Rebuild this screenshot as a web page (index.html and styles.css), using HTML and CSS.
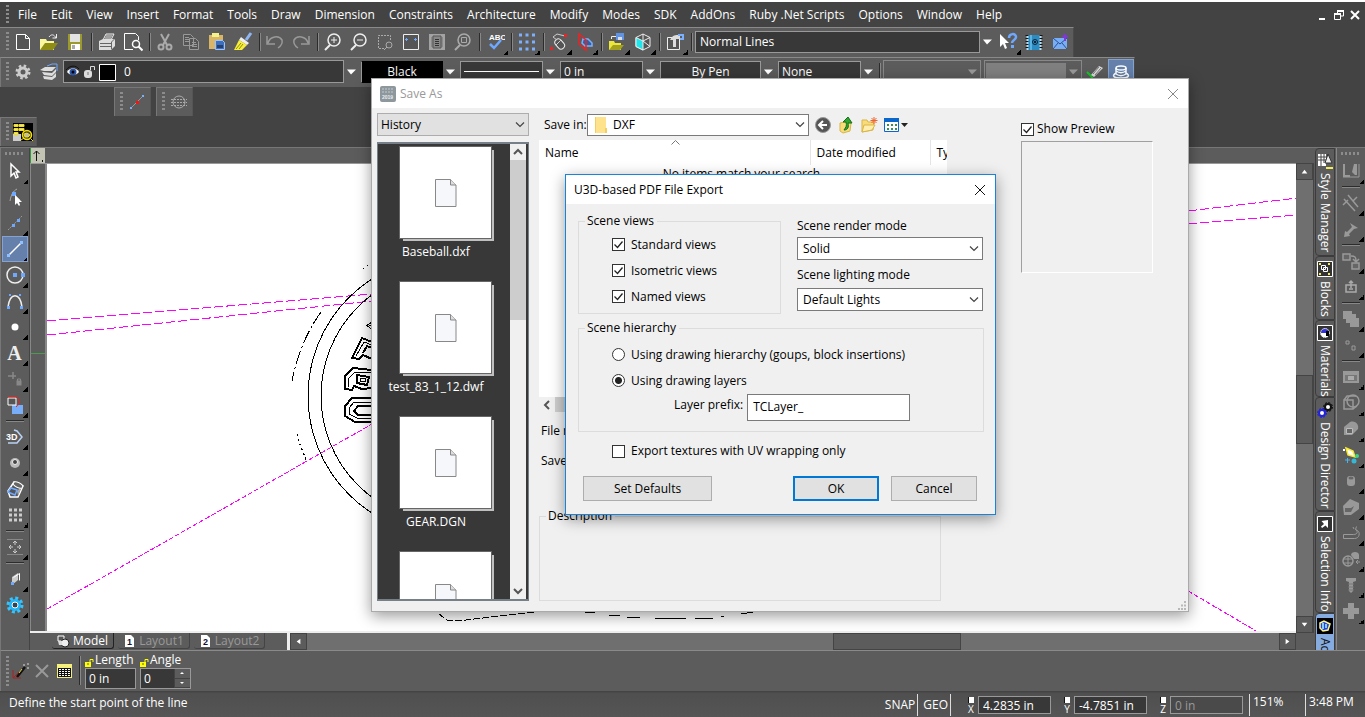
FILE: index.html
```html
<!DOCTYPE html>
<html lang="en">
<head>
<meta charset="utf-8">
<title>U3D-based PDF File Export</title>
<link rel="stylesheet" href="styles.css">
</head>
<body>
<div class="app">
<header class="menubar">
  <i class="grip"></i>
  <nav class="menus">
    <a href="#">File</a><a href="#">Edit</a><a href="#">View</a><a href="#">Insert</a><a href="#">Format</a><a href="#">Tools</a><a href="#">Draw</a><a href="#">Dimension</a><a href="#">Constraints</a><a href="#">Architecture</a><a href="#">Modify</a><a href="#">Modes</a><a href="#">SDK</a><a href="#">AddOns</a><a href="#">Ruby .Net Scripts</a><a href="#">Options</a><a href="#">Window</a><a href="#">Help</a>
  </nav>
  <div class="winbtns">
    <button aria-label="Minimize"><svg viewBox="0 0 12 12"><path d="M2 9h6v2H2z" fill="#fff"/></svg></button>
    <button aria-label="Restore"><svg viewBox="0 0 12 12"><path d="M4.500 4V1.500h6V7H8M1.500 5h6v5.500h-6z" fill="none" stroke="#fff"/><path d="M4 1h7v2H4zM1 4h7v2H1z" fill="#fff"/></svg></button>
    <button aria-label="Close"><svg viewBox="0 0 12 12"><path d="M2 2l8 8M10 2l-8 8" stroke="#fff" stroke-width="2"/></svg></button>
  </div>
</header>

<div class="toolbar">
  <i class="grip"></i>
  <button aria-label="New"><svg viewBox="0 0 20 20"><path d="M3.500 2.500h9l4 4v11h-13zM12.500 2.500v4h4" fill="#555" stroke="#fff"/></svg></button>
  <button aria-label="Open"><svg viewBox="0 0 20 20"><path d="M1 7h6l1 2h7v9H1z" fill="#fbf6a0"/><path d="M6 11h13l-5 7H1z" fill="#8f8d16"/><path d="M10 5c2-3 5-3 7 1M17.500 2v4h-4" fill="none" stroke="#eee"/></svg></button>
  <button aria-label="Save"><svg viewBox="0 0 20 20"><path d="M3 2h14v16H3z" fill="#9c9a2c"/><path d="M5 2h10v8H5z" fill="#e2e2e2"/><path d="M6 12h9v6H6z" fill="#fff"/><path d="M7 13h3v4H7z" fill="#aaa"/></svg></button>
  <i class="sep"></i>
  <button aria-label="Print"><svg viewBox="0 0 20 20"><path d="M6 8l3-6h8l-3 6z" fill="#666" stroke="#eee"/><path d="M9 4h6M8 6h6" stroke="#ddd"/><path d="M2 9l4-2h12v7l-4 4H2z" fill="#ddd"/><path d="M3 11.500h11M3 14.500h11M14.500 17v-7l3-3" stroke="#666" fill="none"/></svg></button>
  <button aria-label="Print preview"><svg viewBox="0 0 20 20"><path d="M10 17.500H1.500v-16h11l3 3V8" fill="none" stroke="#fff"/><circle cx="13" cy="12" r="3.500" fill="#555" stroke="#fff" stroke-width="1.500"/><path d="M15.500 14.500l4 4" stroke="#fff" stroke-width="2"/></svg></button>
  <i class="sep"></i>
  <button aria-label="Cut"><svg viewBox="0 0 20 20" stroke="#aaa" fill="none" stroke-width="2"><path d="M6 2l6 11M14 2L8 13"/><circle cx="6" cy="15" r="2.500"/><circle cx="14" cy="15" r="2.500"/></svg></button>
  <button aria-label="Copy"><svg viewBox="0 0 20 20" stroke="#999" fill="#555"><path d="M2.500 2.500h7l3 3v8h-10zM8.500 6.500h6l3 3v8h-9z"/><path d="M4 5.500h4M4 7.500h4M4 9.500h4M11 10.500h4M11 12.500h5M11 14.500h5"/></svg></button>
  <button aria-label="Paste"><svg viewBox="0 0 20 20"><path d="M2 3h14v14H2z" fill="#d9b667"/><path d="M5 1h7v4H5z" fill="#f4f08a"/><path d="M8.500 8.500h7l2 2v7h-9z" fill="#3c6fbd" stroke="#9cc3ff"/><path d="M10 13h6v3h-6z" fill="#263f6b"/></svg></button>
  <button aria-label="Format painter"><svg viewBox="0 0 20 20"><path d="M18 1l-5 7" stroke="#8fb6f2" stroke-width="3"/><path d="M8 5l8 6-2 2-8-5z" fill="#eee"/><path d="M6 8l8 5-5 5H1z" fill="#f6f03a"/><path d="M3 17l5-6M6 17l4-5" stroke="#8f8d16"/></svg></button>
  <i class="sep"></i>
  <button aria-label="Undo"><svg viewBox="0 0 20 20" fill="none" stroke="#999" stroke-width="1.500"><path d="M2 4v8h8M3 11c2-7 11-8 14-3 1 4-1 6-4 8"/></svg></button>
  <button aria-label="Redo"><svg viewBox="0 0 20 20" fill="none" stroke="#999" stroke-width="1.500"><path d="M18 4v8h-8M17 11C15 4 6 3 3 8c-1 4 1 6 4 8"/></svg></button>
  <i class="sep"></i>
  <button aria-label="Zoom in"><svg viewBox="0 0 20 20" fill="none" stroke="#eee"><circle cx="11" cy="8" r="6" stroke-width="1.500"/><path d="M8 8h6M11 5v6"/><path d="M7 13l-5 5" stroke-width="2"/></svg></button>
  <button aria-label="Zoom out"><svg viewBox="0 0 20 20" fill="none" stroke="#eee"><circle cx="11" cy="8" r="6" stroke-width="1.500"/><path d="M8 8h6"/><path d="M7 13l-5 5" stroke-width="2"/></svg></button>
  <button aria-label="Zoom window"><svg viewBox="0 0 20 20" fill="none" stroke="#aaa"><path d="M9 16.500H3.500v-13h12V9" stroke-dasharray="2 1"/><circle cx="14" cy="13" r="3"/><path d="M12 15l-3 3"/></svg></button>
  <button aria-label="Zoom extents"><svg viewBox="0 0 20 20"><path d="M2.500 2.500h15v15h-15z" fill="#555" stroke="#eee"/><path d="M4 7.500h3M13 7.500h3M5.500 6v3M14.500 6v3" stroke="#6fa8ff"/></svg></button>
  <button aria-label="Full view"><svg viewBox="0 0 20 20"><path d="M2 2h16v16H2z" fill="#a3a3a3"/><path d="M4 5h12v10H4z" fill="#8a8a8a"/><path d="M6 4h8v12H6z" fill="#888" stroke="#555"/><path d="M8 7.500h4M8 9.500h4M8 11.500h4M8 13.500h4" stroke="#333"/></svg></button>
  <button aria-label="Zoom selection"><svg viewBox="0 0 20 20" fill="none" stroke="#aaa"><circle cx="11" cy="8" r="6" stroke-width="1.500"/><path d="M8.500 5.500h5v5h-5z"/><path d="M7 13l-5 5" stroke-width="2"/></svg></button>
  <i class="sep"></i>
  <button class="more" aria-label="Spelling"><svg viewBox="0 0 20 20"><text x="4" y="8" class="abc">ABC</text><path d="M5 12l4 4 7-8" fill="none" stroke="#6fa8ff" stroke-width="2.500"/></svg></button>
  <i class="sep"></i>
  <button class="more" aria-label="Grid"><svg viewBox="0 0 20 20"><path d="M2 3h17M2 10h17M2 17h17" stroke="#7cb0ff" stroke-width="3" stroke-dasharray="3 3.500"/></svg></button>
  <i class="sep"></i>
  <button class="more" aria-label="Snap mouse"><svg viewBox="0 0 20 20"><rect x="7" y="7" width="7" height="11" rx="3.500" transform="rotate(-42 10 12)" fill="#555" stroke="#eee"/><path d="M7 13l5-5M8 8L4 5l4-3 8 2" fill="none" stroke="#ccc"/><path d="M1 15h3v3H1zM15 2h3v3h-3z" fill="#e22"/></svg></button>
  <button class="more" aria-label="Workplane"><svg viewBox="0 0 20 20" fill="none" stroke-width="1.500"><path d="M8 7h5l4 4v3h-7l-3-3z" fill="#345f9c" stroke="#7cb0ff"/><path d="M4 2l7 6v10l-7-6z" stroke="#e22"/></svg></button>
  <i class="sep"></i>
  <button class="more" aria-label="Insert block"><svg viewBox="0 0 20 20"><path d="M2 9h5l1 2h6v7H2z" fill="#ece83a"/><path d="M6 13h11l-4 5H2z" fill="#a3a11d"/><path d="M4.500 7V4.500H9" fill="none" stroke="#eee"/><path d="M9 1h8v7H9z" fill="#5e93e6"/><path d="M11 5h4v3h-4z" fill="#ddd"/></svg></button>
  <button class="more" aria-label="3D view"><svg viewBox="0 0 20 20" stroke="#eee"><path d="M3 5.500L10 2l7 3.500v9L10 18l-7-3.500z" fill="#555"/><path d="M3 5.500L10 9v9l-7-3.500z" fill="#1ee6ea"/><path d="M17 5.500L10 9V2M10 9l7 5.500" fill="none"/></svg></button>
  <i class="sep"></i>
  <button class="more" aria-label="Properties"><svg viewBox="0 0 20 20"><path d="M2.500 5.500h12v12h-12z" fill="#555" stroke="#eee"/><path d="M5 8c2-4 4-5 8-5h2v4h-4v8H8V8z" fill="#ddd"/><path d="M13 3h5v4h-3" fill="none" stroke="#7cb0ff" stroke-width="2"/></svg></button>
  <i class="sep"></i>
  <select class="dark style" aria-label="Style"><option>Normal Lines</option></select><i class="arrow"></i>
  <button class="more" aria-label="Context help"><svg viewBox="0 0 20 20"><path d="M2 2l9 9H7l2 5-2 1-2-5-3 3z" fill="#fff"/><path d="M11 6c0-5 7-5 7-1 0 3-4 3-4 6" fill="none" stroke="#6fa8ff" stroke-width="2.500"/><path d="M13 13h3v3h-3z" fill="#6fa8ff"/></svg></button>
  <button aria-label="Address book"><svg viewBox="0 0 20 20"><path d="M3 3h14v15H3z" fill="#2b8cc4"/><path d="M3.500 3v15M16.500 3v15" stroke="#bde" stroke-width="2"/><path d="M3 3v15M17 3v15" stroke="#111" stroke-width="3" stroke-dasharray="1 2"/><path d="M6 3h2v15H6z" fill="#58b4e4"/><circle cx="11" cy="10" r="2.500" fill="none" stroke="#123"/><circle cx="11" cy="10" r="1"/></svg></button>
  <button aria-label="Send mail"><svg viewBox="0 0 20 20"><path d="M3 6h14v11H3z" fill="#78aef8"/><path d="M3 6l7 6 7-6M3 17l5-6M17 17l-5-6" fill="none" stroke="#2c4f8f"/><path d="M15 9V3M12.500 5.500L15 3l2.500 2.500" fill="none" stroke="#7b3ad0" stroke-width="2"/></svg></button>
</div>

<div class="toolbar props">
  <i class="grip"></i>
  <button aria-label="Settings"><svg viewBox="0 0 20 20"><circle cx="10" cy="10" r="4" fill="none" stroke="#ccc" stroke-width="3"/><circle cx="10" cy="10" r="6" fill="none" stroke="#ccc" stroke-width="3" stroke-dasharray="2.400 2.300"/></svg></button>
  <button aria-label="Layers"><svg viewBox="0 0 20 20"><path d="M1 8l5-3h11l-4 4H5zM3 10l10 1 4-4v3l-4 4-8-1zM4 14l9 1 4-4v4l-4 3-8-1z" fill="#ddd"/><path d="M8 4l5-2h5v7" fill="none" stroke="#6fa8ff"/></svg></button>
  <span class="layer">
    <svg viewBox="0 0 54 20"><path d="M3 10c3-5 9-5 12 0-3 4-9 4-12 0z" fill="#fff"/><circle cx="9" cy="10" r="3.500" fill="#2c55a8"/><circle cx="9" cy="10" r="1.500"/><path d="M2 8c4-5 10-5 13-1" fill="none" stroke="#111"/><rect x="20" y="8" width="8" height="8" rx="3" fill="#ddd"/><path d="M26.500 8V4.500h4V8" fill="none" stroke="#ddd"/><path d="M24 10v3" stroke="#777"/><path d="M35.500 2.500h16v16h-16z" fill="#000" stroke="#fff"/></svg>
    <select aria-label="Layer"><option>0</option></select>
  </span><i class="arrow"></i><i class="gap"></i>
  <select class="dark mid pen" aria-label="Color"><option>Black</option></select><i class="arrow"></i><i class="gap"></i>
  <button class="dark lines" aria-label="Line style"><i></i></button><i class="arrow"></i><i class="gap"></i>
  <select class="dark short" aria-label="Line width"><option>0 in</option></select><i class="arrow"></i><i class="gap"></i>
  <select class="dark mid bypen" aria-label="Pattern"><option>By Pen</option></select><i class="arrow"></i><i class="gap"></i>
  <select class="dark short" aria-label="Brush"><option>None</option></select><i class="arrow"></i>
  <i class="sep"></i>
  <span class="off"><i class="arrow"></i></span><i class="gap"></i>
  <span class="off"><i class="fill"></i><i class="arrow"></i></span>
  <button aria-label="Pick style"><svg viewBox="0 0 20 20"><path d="M2 10l3 3 3 4" stroke="#1c2" stroke-width="2" fill="none"/><path d="M6 13L14 4l4 2-9 9z" fill="#ddd"/><path d="M8 12l6-7M10 13l6-7" stroke="#777"/></svg></button>
  <button class="on" aria-label="Render manager"><svg viewBox="0 0 20 20" fill="none" stroke="#fff" stroke-width="1.500"><ellipse cx="10" cy="6" rx="5" ry="2"/><path d="M5 6v6M15 6v6M5 9c3 2 7 2 10 0M5 12c3 2 7 2 10 0M5 11c-5 3-2 5 5 5s10-2 5-5"/></svg></button>
</div>

<div class="minirow">
  <div class="mini"><i class="grip"></i><button aria-label="Midpoint"><svg viewBox="0 0 20 20"><path d="M4 16L16 4" stroke="#999"/><path d="M3 15h2v2H3zM15 3h2v2h-2z" fill="#7cb0ff"/><path d="M9 9h3v3H9z" fill="#f11"/></svg></button></div>
  <div class="mini"><i class="grip"></i><button aria-label="Hatch"><svg viewBox="0 0 20 20" fill="none" stroke="#aaa"><circle cx="10" cy="10" r="6"/><path d="M2 7.500h16M2 10.500h16M2 13.500h16" stroke-dasharray="2 1"/></svg></button></div>
</div>
<div class="filerow">
  <div class="mini"><i class="grip"></i><button aria-label="Drawing database"><svg viewBox="0 0 20 20"><path d="M0 1h20v18H0z"/><path d="M0 12h8v7H0z" fill="#ccc"/><path d="M1 2.500h4v2H1zM6 2.500h5v2H6zM1 6.500h4v2H1zM6 6.500h5v2H6zM1 10.500h4v2H1z" fill="#ddd" stroke="#f4e000"/><circle cx="14" cy="13" r="4.500" fill="#444" stroke="#f4e000" stroke-width="1.500"/><path d="M11 12l3-1 3 2-2 2h-3zM8 18l3-2M18 17l2 2" fill="#bbb" stroke="#f4e000"/></svg></button></div>
</div>

<main class="work">
  <aside class="tools left">
    <i class="grip"></i>
    <button class="more" aria-label="Select"><svg viewBox="0 0 20 20"><path d="M6 3v12l3-3 2 5 2-1-2-5h3z" fill="#555" stroke="#fff" stroke-width="1.500"/></svg></button>
    <button aria-label="Edit node"><svg viewBox="0 0 20 20"><path d="M5 14C6 8 8 4 12 2M9 7l6 6" stroke="#aaa" fill="none"/><path d="M7 5h4v4H7z" fill="#6fa8ff"/><path d="M10 8v10l2-2 2 3 1-1-1-3h3z" fill="#fff"/></svg></button>
    <button class="more" aria-label="Construction line"><svg viewBox="0 0 20 20"><path d="M3 17L17 3" stroke="#999" stroke-dasharray="2 1"/><path d="M7 11h3v3H7zM12 6h3v3h-3z" fill="#6fa8ff"/></svg></button>
    <button class="more on" aria-label="Line"><svg viewBox="0 0 20 20"><path d="M4 16L16 4" stroke="#fff" stroke-width="1.500"/><path d="M2 15h3v3H2zM15 2h3v3h-3z" fill="#8fc0ff"/></svg></button>
    <button class="more" aria-label="Circle"><svg viewBox="0 0 20 20"><circle cx="10" cy="10" r="8" fill="none" stroke="#eee" stroke-width="1.500"/><path d="M8 8h4v4H8zM16 8h4v4h-4z" fill="#6fa8ff"/></svg></button>
    <button class="more" aria-label="Curve"><svg viewBox="0 0 20 20"><path d="M3 16c2-15 12-15 14 0" fill="none" stroke="#eee" stroke-width="1.500"/><path d="M2 15h3v3H2zM15 15h3v3h-3zM4 3h2v2H4zM14 3h2v2h-2z" fill="#6fa8ff"/></svg></button>
    <button class="more" aria-label="Point"><svg viewBox="0 0 20 20"><circle cx="10" cy="10" r="3.500" fill="#fff"/></svg></button>
    <button class="more letter" aria-label="Text">A</button>
    <button class="more" aria-label="Constraint"><svg viewBox="0 0 20 20" stroke="#888" fill="#888"><path d="M3 7h8M8 3v7" stroke-width="1.500"/><rect x="12" y="12" width="4" height="4"/><path d="M12.500 12v-2h3v2" fill="none"/></svg></button>
    <button class="more" aria-label="Boolean"><svg viewBox="0 0 20 20"><path d="M7 10h11v9H7z" fill="#78aef8"/><path d="M3 3h8v7H3z" fill="#555" stroke="#fff"/><path d="M3 2h8c4 2 5 6 0 10" fill="none" stroke="#e22"/></svg></button>
    <i class="sep"></i>
    <button class="more" aria-label="3D polyline"><svg viewBox="0 0 20 20"><text x="1" y="13" class="three">3D</text><path d="M9 3l3 1 5 6-5 6H3" fill="none" stroke="#b9d2f5" stroke-width="1.500"/></svg></button>
    <button class="more" aria-label="Sphere"><svg viewBox="0 0 20 20"><circle cx="10" cy="10" r="5" fill="#bbb"/><circle cx="10" cy="9" r="2.500" fill="#444" stroke="#eee"/></svg></button>
    <button class="more" aria-label="Solid tools"><svg viewBox="0 0 20 20"><path d="M3 12L9 3l9 4-5 11H5z" fill="#555" stroke="#fff" stroke-width="1.500"/><path d="M12 12l5-5-4 10z" fill="#aaa"/><ellipse cx="13" cy="6" rx="5" ry="2.500" fill="#666" stroke="#fff" transform="rotate(25 13 6)"/><path d="M3 13l7 3 2-5-6-2z" fill="#555" stroke="#6fa8ff" stroke-width="1.500"/></svg></button>
    <button class="more" aria-label="Array"><svg viewBox="0 0 20 20"><path d="M4 5h13M4 10h13M4 15h13" stroke="#ccc" stroke-width="3" stroke-dasharray="3 2"/></svg></button>
    <i class="sep"></i>
    <button class="more" aria-label="Pan"><svg viewBox="0 0 20 20" fill="none" stroke="#ccc"><path d="M2 2.500h16M2 17.500h16" stroke="#888"/><path d="M10 4v4M10 12v4M4 10h4M12 10h4M8 6l2-2 2 2M8 14l2 2 2-2M6 8l-2 2 2 2M14 8l2 2-2 2"/></svg></button>
    <i class="sep"></i>
    <button class="more" aria-label="Wall"><svg viewBox="0 0 20 20"><path d="M7 8l6-4v7l-6 5z" fill="#ccc"/><path d="M8.500 8.500l6-4v7" fill="none" stroke="#fff"/><path d="M6 13h3v3H6z" fill="#6fa8ff"/></svg></button>
    <button class="more" aria-label="Options"><svg viewBox="0 0 20 20"><circle cx="10" cy="10" r="4.500" fill="#345" stroke="#1fb4f5" stroke-width="3"/><circle cx="10" cy="10" r="7" fill="none" stroke="#35c3ff" stroke-width="3" stroke-dasharray="3 2.500"/><circle cx="10" cy="10" r="3" fill="none" stroke="#fff"/></svg></button>
  </aside>

  <section class="doc">
    <div class="ruler-h"><svg viewBox="0 0 15 15"><path d="M0 0h15v15H0z" fill="#c3c4b4"/><path d="M0 0v15" stroke="#2e9d3c" stroke-width="2"/><path d="M6.500 13V3M3.500 6l3-3 3 3M12.500 12v2" stroke="#111" fill="none"/></svg></div>
    <div class="docrow">
      <div class="ruler-v"><i></i></div>
      <svg class="canvas" viewBox="47 163 1249 468" preserveAspectRatio="xMinYMin slice" fill="none" shape-rendering="crispEdges">
        <g stroke="#f0f" stroke-dasharray="9 3">
          <path d="M47 320L372 293M47 334L372 300M1188 210L1297 197M1188 223L1297 214"/>
          <path d="M47 608L372 423M1188 590L1258 631" stroke-dasharray="5 2"/>
        </g>
        <g stroke="#000">
          <circle cx="447" cy="395" r="139"/><circle cx="447" cy="395" r="126"/>
          <path d="M321 311Q300 340 292 380" stroke-dasharray="14 3 2 3"/>
          <path d="M297 433l2 8 8 20M363 268l9-7" stroke-dasharray="2 3"/>
          <g stroke-width="2">
            <path d="M372 397H352L345 405V415L355 421H372M372 405H358L354 410L358 414H372"/>
            <path d="M372 369L353 367L345 375V388L352 389L354 385L362 388L372 387M357 374L369 376L367 384L357 382z"/>
            <path d="M372 341L362 337L352 357L359 358L363 354L372 358M372 347L367 345L363 352"/>
          </g>
          <path d="M372 401H354L349 407V413L357 417H372M372 372L355 371L349 377L348 386M360 377l6 1-1 3-5-1zM372 344L364 341L356 355M366 325l6-4M367 325l5 3M369 325l3-1"/>
          <path d="M439 613L447 619L466 619L500 615L536 611" stroke-dasharray="7 2"/>
          <path d="M585 611l10 1M609 614l11 1M627 616h13M655 617h31M695 617h18M721 615h3M741 613l12-2"/>
        </g>
      </svg>
    </div>
    <div class="sheets">
      <button class="sheet current"><svg viewBox="0 0 14 14"><path d="M2 2h6v5H2z" fill="#555" stroke="#fff"/><circle cx="9" cy="9" r="4" fill="#eee" stroke="#222"/><path d="M2 7h4v4H3z" fill="#ddd"/></svg>Model</button>
      <button class="sheet"><svg viewBox="0 0 14 14"><path d="M3 1h6l3 3v9H3z" fill="#fff"/><text x="5" y="11" class="num">1</text></svg>Layout1</button>
      <button class="sheet"><svg viewBox="0 0 14 14"><path d="M3 1h6l3 3v9H3z" fill="#fff"/><text x="5" y="11" class="num">2</text></svg>Layout2</button>
      <div class="hscroll"><button aria-label="Scroll left"><svg viewBox="0 0 16 16"><path d="M10 5v6L6 8z" fill="#fff"/></svg></button><i></i><button aria-label="Scroll right"><svg viewBox="0 0 16 16"><path d="M6 5v6l4-3z" fill="#fff"/></svg></button></div>
    </div>
  </section>

  <div class="vscroll"><button aria-label="Scroll up"><svg viewBox="0 0 16 16"><path d="M5 10h6L8 6z" fill="#fff"/></svg></button><i></i><button aria-label="Scroll down"><svg viewBox="0 0 16 16"><path d="M5 6h6l-3 4z" fill="#fff"/></svg></button></div>

  <nav class="palettes">
    <button class="pal p1"><svg viewBox="0 0 16 16"><path d="M1 1h8v12H1z" fill="#fff"/><path d="M1 4h8M1 7h8M4 1v12M7 1v9" stroke="#444"/><path d="M11 1l4 9H8z" fill="#eee" stroke="#333"/><path d="M9 14h7v2H9z" fill="#f1ec5a"/></svg>Style Manager</button>
    <button class="pal p2"><svg viewBox="0 0 16 16"><path d="M.5.5h15v15H.5z" fill="#333" stroke="#fff"/><path d="M6.500 6.500h4v4h-4zM4.500 4.500h4v4h-4z" fill="none" stroke="#fff"/><path d="M2 3h2M11 3h2M2 13h2M11 13h2" stroke="#f1ec5a" stroke-width="2"/></svg>Blocks</button>
    <button class="pal p3"><svg viewBox="0 0 16 16"><path d="M.5.5h15v15H.5z" fill="#333" stroke="#fff"/><circle cx="8" cy="8" r="4.500" fill="#fff" stroke="#eee" stroke-dasharray="1 1"/><path d="M4 8a4 4 0 018 0z" fill="#33d"/><path d="M9 6h3v5H9z"/></svg>Materials</button>
    <button class="pal p4"><svg viewBox="0 0 16 16"><circle cx="11" cy="5" r="3" fill="#fff" stroke="#111" stroke-width="2"/><circle cx="11" cy="5" r="4.500" fill="none" stroke="#111" stroke-dasharray="2 1.500"/><circle cx="5" cy="11" r="3" fill="#fff" stroke="#22d" stroke-width="2"/><circle cx="5" cy="11" r="4.500" fill="none" stroke="#22d" stroke-dasharray="2 1.500"/></svg>Design Director</button>
    <button class="pal p5"><svg viewBox="0 0 16 16"><path d="M.5.500h15v15H.5z" fill="#333" stroke="#fff"/><path d="M11 4v8L8.500 9.500 5 12 4 10.500 7 8 4.500 5z" fill="#fff"/></svg>Selection Info</button>
    <button class="pal p6"><svg viewBox="0 0 16 16"><path d="M0 0h16v16H0z"/><path d="M3 5l4-2 6 3-2 6-5 1-3-3z" fill="#24d" stroke="#fff58a" stroke-width="1.500"/><path d="M6 5v6M9 6v4" stroke="#8cf" stroke-width="2"/></svg>Active</button>
  </nav>

  <aside class="tools right">
    <i class="grip"></i>
    <button class="more" aria-label="Magnet"><svg viewBox="0 0 20 20"><path d="M2 3h2v11h5v2H2zM18 3h-5l-2 8 3 3h2V3z" fill="#999"/><path d="M2 16h16V3" fill="none" stroke="#999"/></svg></button>
    <i class="sep"></i>
    <button class="more" aria-label="Parallel"><svg viewBox="0 0 20 20"><path d="M3 6l11 12M7 2l10 12M2 12l5-5M12 8l4-4" stroke="#999" stroke-width="1.500"/></svg></button>
    <button class="more" aria-label="Stretch"><svg viewBox="0 0 20 20"><path d="M9 4l8 5-4 1-5 5 1 2-6 1 1-6 2 1 5-5z" fill="#999"/></svg></button>
    <i class="sep"></i>
    <button class="more" aria-label="Copy object"><svg viewBox="0 0 20 20" fill="#666" stroke="#999" stroke-width="1.500"><path d="M2 3h7v6H2zM11 12h7v6h-7z"/><path d="M10 5c4 0 5 1 5 5M12 8l3 3 3-3" fill="none"/></svg></button>
    <button class="more" aria-label="Lock"><svg viewBox="0 0 20 20" fill="none" stroke="#aaa" stroke-width="1.500"><path d="M5 8h10v7H5zM8 12h4M10 4v7M8 6l2-2 2 2"/></svg></button>
    <i class="sep"></i>
    <button class="more" aria-label="Order"><svg viewBox="0 0 20 20" fill="#999"><path d="M2 2h9v3h4v4h3v9h-9v-4H5v-4H2z"/></svg></button>
    <button class="more" aria-label="Align"><svg viewBox="0 0 20 20" fill="none" stroke="#999"><path d="M5 6h3v3H5zM11 11h3v4h-3z"/></svg></button>
    <i class="sep"></i>
    <button class="more" aria-label="Table"><svg viewBox="0 0 20 20"><path d="M2 4h16v12H2z" fill="#999"/><path d="M4 8h12v6H4z" fill="#777"/><path d="M7 9h6v4H7z" fill="#aaa"/></svg></button>
    <button class="more" aria-label="Union"><svg viewBox="0 0 20 20" fill="none" stroke="#999" stroke-width="1.500"><circle cx="12" cy="8" r="6"/><path d="M3 7h9v9H3zM3 7l3-4h9M12 16l4-3"/></svg></button>
    <button class="more" aria-label="Tube"><svg viewBox="0 0 20 20"><path d="M3 8l6-5c6-2 9 3 8 7l-6 6H3z" fill="#999"/><path d="M5.500 9.500h6v5h-6z" fill="#666" stroke="#bbb"/></svg></button>
    <button class="more" aria-label="Decompose"><svg viewBox="0 0 20 20"><path d="M5 3l7 3 2 6-7-2z" fill="#fff" stroke="#f4e92e" stroke-width="1.500"/><path d="M2 4h2v2H2z" fill="#fff"/><circle cx="16" cy="11" r="2" fill="#3cd08c"/><circle cx="13" cy="16" r="2.500" fill="#35b8d8"/><path d="M4 15h5M6.500 13v5" stroke="#4db2e8"/></svg></button>
    <button class="more" aria-label="Cylinder"><svg viewBox="0 0 20 20"><rect x="6" y="5" width="8" height="10" rx="3" fill="#999"/><ellipse cx="10" cy="7" rx="2.500" ry="1.500" fill="#666"/></svg></button>
    <button class="more" aria-label="Fillet"><svg viewBox="0 0 20 20"><path d="M2 9l7-7 9 4v6l-8 6H3z" fill="#999"/><path d="M4 11h6l3-2-3 6H4z" fill="#666"/></svg></button>
    <button class="more" aria-label="Sweep"><svg viewBox="0 0 20 20" fill="none" stroke="#999"><path d="M2.500 11.500h10c4 0 5-3 2-5l1-3M2.500 11.500v4h11c5 0 6-6 3-8l-2-1M13 6l-1-2"/></svg></button>
    <button class="more" aria-label="Mesh"><svg viewBox="0 0 20 20"><circle cx="7" cy="12" r="5" fill="none" stroke="#999" stroke-width="1.500"/><path d="M2 10h10M2 14h10M7 7v10M15 13h4M15 13l2-2M15 13l2 2" stroke="#999"/><path d="M10 6c0-4 8-4 8 0v4h-5z" fill="#999"/></svg></button>
    <button class="more" aria-label="Screw"><svg viewBox="0 0 20 20"><path d="M5 3h10v3l-3 1v9l-2 2-2-2V7L5 6z" fill="#999"/><path d="M7 9h6M7 12h6M7 15h6" stroke="#777"/></svg></button>
    <button class="more" aria-label="Add"><svg viewBox="0 0 20 20"><path d="M7 2h6v5h5v6h-5v5H7v-5H2V7h5z" fill="#999"/></svg></button>
  </aside>
</main>

<section class="inspector">
  <i class="grip"></i>
  <button aria-label="Wand"><svg viewBox="0 0 20 20"><path d="M7 16L15 6" stroke="#111" stroke-width="2.500"/><path d="M9 12l3-4" stroke="#e5d73b"/><path d="M3 9v8h8M3 17l6-6" stroke="#a22" fill="none"/><path d="M13 4h2M17 3h2M17 7h2" stroke="#ddd"/></svg></button>
  <button aria-label="Cancel"><svg viewBox="0 0 20 20"><path d="M4 4l12 12M16 4L4 16" stroke="#999" stroke-width="2"/></svg></button>
  <button aria-label="Table"><svg viewBox="0 0 20 20"><path d="M3 3h15v14H3z" fill="#f4ef7c"/><path d="M4 7h13v9H4z" fill="#111"/><path d="M5 8.500h11M5 10.500h11M5 12.500h11M5 14.500h11" stroke="#fff" stroke-dasharray="2 1"/></svg></button>
  <i class="sep"></i>
  <div class="field"><label for="len"><svg viewBox="0 0 9 9"><path d="M0 4h6v5H0z" fill="#ff0"/><path d="M5 4V1.500h3V4" fill="none" stroke="#ff0"/><path d="M3 5v2" stroke="#555"/></svg>Length</label><input id="len" value="0 in"></div>
  <div class="field"><label for="ang"><svg viewBox="0 0 9 9"><path d="M0 4h6v5H0z" fill="#ff0"/><path d="M5 4V1.500h3V4" fill="none" stroke="#ff0"/><path d="M3 5v2" stroke="#555"/></svg>Angle</label><div class="spin"><input id="ang" value="0"><span><button aria-label="Increase"><svg viewBox="0 0 15 8"><path d="M5 5h4L7 3z" fill="#fff"/></svg></button><button aria-label="Decrease"><svg viewBox="0 0 15 8"><path d="M5 3h4L7 5z" fill="#fff"/></svg></button></span></div></div>
</section>

<footer class="status">
  <p>Define the start point of the line</p>
  <button class="cell">SNAP</button><button class="cell">GEO</button>
  <label class="coord" for="cx"><i></i>X</label><input id="cx" value="4.2835 in">
  <label class="coord" for="cy"><i></i>Y</label><input id="cy" value="-4.7851 in">
  <label class="coord" for="cz"><i></i>Z</label><input id="cz" value="0 in" disabled>
  <span class="zoom">151%</span><span class="time">3:48 PM</span>
</footer>
</div>

<section class="dialog save" role="dialog" aria-label="Save As">
  <header><svg class="logo" viewBox="0 0 16 16"><rect width="16" height="16" rx="2" fill="#8d979c"/><path d="M2 3h12M2 6h12" stroke="#c3cacd" stroke-dasharray="2 1"/><text x="2" y="13" class="year">2019</text></svg><h2>Save As</h2><button aria-label="Close"><svg viewBox="0 0 12 12"><path d="M1 1l10 10M11 1L1 11" stroke="#888"/></svg></button></header>
  <div class="savebody">
    <div class="places">
      <select class="grey" aria-label="Places"><option>History</option></select>
      <div class="history">
        <div class="thumbs">
          <figure><div><svg viewBox="0 0 22 28"><path d="M.5.5h15l5.500 5.500v21.500H.5z" fill="#f5f7fa" stroke="#888"/><path d="M15.500.5V6H21" fill="#ddd" stroke="#888"/></svg></div><figcaption>Baseball.dxf</figcaption></figure>
          <figure><div><svg viewBox="0 0 22 28"><path d="M.5.5h15l5.500 5.500v21.500H.5z" fill="#f5f7fa" stroke="#888"/><path d="M15.500.5V6H21" fill="#ddd" stroke="#888"/></svg></div><figcaption>test_83_1_12.dwf</figcaption></figure>
          <figure><div><svg viewBox="0 0 22 28"><path d="M.5.5h15l5.500 5.500v21.500H.5z" fill="#f5f7fa" stroke="#888"/><path d="M15.500.5V6H21" fill="#ddd" stroke="#888"/></svg></div><figcaption>GEAR.DGN</figcaption></figure>
          <figure><div><svg viewBox="0 0 22 28"><path d="M.5.5h15l5.500 5.500v21.500H.5z" fill="#f5f7fa" stroke="#888"/><path d="M15.500.5V6H21" fill="#ddd" stroke="#888"/></svg></div></figure>
        </div>
        <div class="lightscroll"><svg viewBox="0 0 16 16"><path d="M4 10l4-4 4 4" fill="none" stroke="#555" stroke-width="2"/></svg><i></i><svg viewBox="0 0 16 16"><path d="M4 6l4 4 4-4" fill="none" stroke="#555" stroke-width="2"/></svg></div>
      </div>
    </div>
    <div class="files">
      <div class="savein">
        <label for="folder">Save in:</label>
        <span class="folder"><svg viewBox="0 0 14 16"><path d="M1 0h11v12h1v4H1z" fill="#ffe28c"/><path d="M1 0h1v16H1zM11 11h2v5h-2z" fill="#f3cf62"/></svg><select id="folder"><option>DXF</option></select></span>
        <button aria-label="Back"><svg viewBox="0 0 18 18"><circle cx="9" cy="9" r="7.500" fill="#555" stroke="#999"/><path d="M13 9H5M9 5L5 9l4 4" stroke="#fff" stroke-width="2" fill="none"/></svg></button>
        <button aria-label="Up"><svg viewBox="0 0 18 18"><path d="M3 7l5-1 6 1-1 8-7 2-3-2z" fill="#f8dc7c" stroke="#d9b544"/><path d="M7 14c4 0 5-3 4-7h4l-4-6-5 5h3c1 4 0 5-2 8z" fill="#2fa52f" stroke="#156e15"/></svg></button>
        <button aria-label="New folder"><svg viewBox="0 0 18 18"><path d="M2 4h5l1 2h6l-1 8-11 2z" fill="#f8dc7c" stroke="#d9b544"/><path d="M4 9h11l-3 5-10 2z" fill="#ffeeb0" stroke="#d9b544"/><path d="M14 1v7M10.500 4.500h7M11.500 2l5 5M16.500 2l-5 5" stroke="#f0632e"/></svg></button>
        <button class="views" aria-label="View menu"><svg viewBox="0 0 26 18"><path d="M1.500 2.500h14v13h-14z" fill="#fff" stroke="#0b67c9"/><path d="M1 2h15v4H1z" fill="#0b67c9"/><path d="M4 9h10M4 13h10" stroke="#3c8f4c" stroke-width="2" stroke-dasharray="2 2"/><path d="M18 7h7l-3.500 4z" fill="#222"/></svg></button>
      </div>
      <div class="list">
        <table><thead><tr><th class="cname">Name</th><th class="cdate">Date modified</th><th>Ty</th></tr></thead></table>
        <svg class="sort" viewBox="0 0 9 5"><path d="M.5 4.500l4-4 4 4" fill="none" stroke="#777"/></svg>
        <p>No items match your search.</p>
      </div>
      <div class="hlight"><svg viewBox="0 0 16 16"><path d="M10 4L6 8l4 4" fill="none" stroke="#555" stroke-width="2"/></svg><i></i></div>
      <div class="row"><label for="fname">File name:</label><input id="fname"></div>
      <div class="row"><label for="ftype">Save as type:</label><input id="ftype"></div>
      <fieldset class="desc"><legend>Description</legend></fieldset>
    </div>
    <div class="preview"><label class="check"><input type="checkbox" checked>Show Preview</label><div class="box"></div></div>
    <svg class="resize" viewBox="0 0 9 9"><path d="M7 1h2M4 4.500h2M7 4.500h2M1 8h2M4 8h2M7 8h2" stroke="#b8b8b8" stroke-width="2"/></svg>
  </div>
</section>

<section class="dialog export" role="dialog" aria-label="U3D-based PDF File Export">
  <header><h2>U3D-based PDF File Export</h2><button aria-label="Close"><svg viewBox="0 0 12 12"><path d="M1 1l10 10M11 1L1 11" stroke="#111"/></svg></button></header>
  <form>
    <div class="cols">
      <fieldset class="scene"><legend>Scene views</legend>
        <label class="check"><input type="checkbox" checked>Standard views</label>
        <label class="check"><input type="checkbox" checked>Isometric views</label>
        <label class="check"><input type="checkbox" checked>Named views</label>
      </fieldset>
      <div class="modes">
        <label for="render">Scene render mode</label><select id="render"><option>Solid</option></select>
        <label for="light">Scene lighting mode</label><select id="light"><option>Default Lights</option></select>
      </div>
    </div>
    <fieldset class="hier"><legend>Scene hierarchy</legend>
      <label class="check"><input type="radio" name="h">Using drawing hierarchy (goups, block insertions)</label>
      <label class="check"><input type="radio" name="h" checked>Using drawing layers</label>
      <div class="prefix"><label for="prefix">Layer prefix:</label><input id="prefix" value="TCLayer_"></div>
    </fieldset>
    <label class="check uv"><input type="checkbox">Export textures with UV wrapping only</label>
    <div class="actions"><button type="button" class="defaults">Set Defaults</button><button type="button" class="ok">OK</button><button type="button" class="cancel">Cancel</button></div>
  </form>
</section>
</body>
</html>
```
FILE: styles.css
```css
* { box-sizing: border-box; }
body {
  margin: 0;
  position: relative;
  height: 100vh;
  overflow: hidden;
  background: #434343;
  font: 12px/16px "Open Sans", "Noto Sans", sans-serif;
  color: #000;
}
button, select, input { font: inherit; color: inherit; margin: 0; padding: 0; border: 0; background: none; border-radius: 0; }
select { appearance: none; }
svg { display: block; flex: none; }
p, h2, figure, fieldset { margin: 0; padding: 0; }

.app { display: flex; flex-direction: column; height: 100%; border-top: 2px solid #fff; color: #fff; }

/* grips and separators */
.grip { flex: none; width: 3px; height: 20px; margin: 0 1px 0 6px; background: repeating-linear-gradient(#8c8c8c 0 2px, transparent 2px 4px); }
.sep { flex: none; width: 6px; height: 18px; background: linear-gradient(90deg, #2c2c2c 1px, #888 1px 2px) 3px 0 / 2px 100% no-repeat; }

/* menu bar */
.menubar { display: flex; align-items: center; flex: none; height: 25px; }
.menus { display: flex; gap: 14px; padding-left: 8px; flex: 1; white-space: nowrap; }
.menus a { color: #fff; text-decoration: none; }
.winbtns { display: flex; gap: 4px; padding-right: 4px; }
.winbtns svg { width: 12px; height: 12px; }

/* toolbars */
.toolbar {
  display: flex; align-items: center; align-self: flex-start; flex: none;
  height: 30px; padding-bottom: 2px; background: #5c5c5c; border-top: 1px solid #8a8a8a; border-right: 1px solid #4a4a4a;
}
.toolbar.props { border-left: 1px solid #777; }
.toolbar.props .grip { margin-left: 5px; }
.toolbar > button:not(.lines), .tools > button, .mini > button, .inspector > button {
  display: grid; place-items: center; flex: none; width: 26px; height: 26px;
}
.toolbar button svg, .tools svg, .mini svg, .inspector > button svg { width: 20px; height: 20px; }
.more { background: linear-gradient(135deg, transparent 50%, #000 50%) right bottom / 5px 5px no-repeat; }
.on { background-color: #6581ab; outline: 1px solid #86a3d0; outline-offset: -1px; }
.abc { font: bold 8px "Liberation Sans", sans-serif; fill: #fff; }
.three { font: bold 9px "Liberation Sans", sans-serif; fill: #fff; }
.num { font: bold 9px "Liberation Sans", sans-serif; fill: #113; }
.year { font: bold 5px "Liberation Sans", sans-serif; fill: #e8ecee; }

.dark { flex: none; height: 22px; padding-left: 4px; background: #383838; border: 1px solid #999; text-align: left; }
.style { width: 285px; margin-left: 1px; }
.short { width: 83px; padding-left: 3px; }
.mid { text-align: center; text-align-last: center; padding: 0; }
.pen { width: 82px; background: #000; border-color: #000 #000 #000 #999; }
.bypen { width: 101px; }
.lines { width: 83px; padding: 0 3px; }
.lines i { display: block; height: 1px; background: #fff; }
.arrow { flex: none; width: 15px; height: 8px; background: #fff; clip-path: polygon(3px 2px, 12px 2px, 7px 7px); }
.gap { flex: none; width: 2px; }
.layer { display: flex; align-items: center; flex: none; width: 281px; height: 23px; margin-left: 1px; border: 1px solid #999; background: #383838; }
.layer svg { width: 54px; height: 20px; }
.layer select { flex: 1; padding-left: 6px; }
.off { display: flex; align-items: center; justify-content: flex-end; flex: none; width: 98px; height: 23px; margin-left: 1px; border: 1px solid #888; }
.off .arrow { background: #999; }
.fill { flex: 1; height: 17px; margin-left: 1px; background: #808080; }

.minirow { display: flex; gap: 5px; flex: none; height: 30px; padding-left: 114px; }
.filerow { display: flex; flex: none; height: 30px; }
.mini { display: flex; align-items: center; width: 37px; height: 29px; background: #5c5c5c; border: solid; border-width: 1px 1px 0 1px; border-color: #777 #555 #555 #777; }
.mini .grip { margin-left: 5px; }

/* work area */
.work { display: flex; flex: 1; min-height: 0; background: #5c5c5c; border-top: 1px solid #777; }
.tools { display: flex; flex-direction: column; align-items: center; flex: none; padding-top: 4px; }
.tools .grip { width: 20px; height: 3px; margin: 0 0 3px; background: repeating-linear-gradient(90deg, #8c8c8c 0 2px, transparent 2px 4px); }
.tools .sep { width: 18px; height: 6px; background: linear-gradient(#2c2c2c 1px, #888 1px 2px) 0 2px / 100% 2px no-repeat; }
.left { width: 30px; padding-right: 1px; border-left: 1px solid #777; border-right: 1px solid #444; }
.right { width: 29px; border-left: 1px solid #888; }
.letter { font: bold 20px "Liberation Serif", serif; color: #eee; }
.doc { display: flex; flex-direction: column; flex: 1; min-width: 0; }
.ruler-h { flex: none; height: 16px; border-bottom: 1px solid #999; }
.ruler-h svg { width: 15px; height: 15px; }
.docrow { display: flex; flex: 1; min-height: 0; border-bottom: 2px solid #eee; }
.ruler-v { flex: none; width: 17px; border: solid #888; border-width: 0 2px 0 1px; }
.ruler-v i { display: block; height: 1px; margin-top: 189px; background: #4c9a50; }
.canvas { flex: 1; min-width: 0; height: 100%; background: #fff; }
.sheets { display: flex; flex: none; height: 17px; padding-left: 22px; overflow: hidden; }
.sheet { display: flex; align-items: center; gap: 3px; flex: none; height: 16px; padding: 0 5px 0 4px; margin-right: 4px; border: solid #444; border-width: 0 1px 1px 0; border-radius: 0 0 3px 3px; color: #999; }
.sheet.current { color: #fff; border-color: #222; }
.sheet svg { width: 14px; height: 14px; }
.hscroll { display: flex; flex: 1; margin-left: 18px; border-left: 3px solid #eee; background: #6f6f6f; justify-content: space-between; }
.hscroll i { flex: 0 1 128px; margin-left: 208px; background: #5c5c5c; border: 1px solid #444; }
.hscroll button, .vscroll button { flex: none; width: 17px; height: 17px; background: #5c5c5c; border: 1px solid #444; }
.hscroll svg, .vscroll svg { width: 15px; height: 15px; }
.vscroll { display: flex; flex-direction: column; justify-content: space-between; flex: none; width: 18px; margin: 15px 0 17px; background: #6f6f6f; border-right: 1px solid #444; }
.vscroll i { height: 69px; margin-top: 22px; background: #5c5c5c; border: 1px solid #444; }

.palettes { display: flex; flex-direction: column; flex: none; width: 22px; overflow: hidden; padding-left: 1px; }
.pal { writing-mode: vertical-rl; display: flex; align-items: center; justify-content: flex-start; gap: 4px; flex: none; width: 20px; padding: 4px 0; white-space: nowrap; border: 1px solid #3c3c3c; border-radius: 4px 0 0 4px; font-size: 12px; line-height: 16px; }
.pal svg { width: 16px; height: 16px; }
.p1 { height: 108px; }
.p2 { height: 64px; }
.p3 { height: 77px; }
.p4 { height: 114px; }
.p5 { height: 102px; }
.p6 { height: 70px; background: #86abdf; color: #111; }

/* inspector bar */
.inspector { display: flex; align-items: center; flex: none; height: 41px; padding-bottom: 1px; background: #5c5c5c; border-top: 1px solid #8a8a8a; border-left: 1px solid #777; }
.inspector .grip { height: 30px; margin-right: 0; margin-left: 5px; }
.inspector > button { width: 22px; }
.inspector .sep { height: 29px; margin-right: 3px; margin-left: 1px; }
.field { width: 51px; margin-right: 4px; }
.field label { display: flex; align-items: center; gap: 1px; height: 16px; }
.field label svg { width: 9px; height: 9px; margin-top: 4px; }
.field > input, .spin { display: flex; width: 51px; height: 21px; padding-left: 3px; border: 1px solid #999; background: #383838; }
.spin input { flex: 1; min-width: 0; }
.spin span { display: flex; flex-direction: column; width: 16px; background: #5c5c5c; }
.spin button { flex: 1; border: solid #444; border-width: 0 0 1px 1px; }
.spin svg { width: 15px; height: 8px; }

/* status bar */
.status { display: flex; align-items: center; flex: none; height: 26px; padding-top: 2px; background: linear-gradient(#444 1px, #4f4f4f 2px, #555); }
.status p { flex: 1; padding: 0 0 4px 9px; }
.cell { height: 22px; padding: 0 2px 0 5px; border-right: 1px solid #ddd; }
.coord { display: flex; flex-direction: column; align-items: center; gap: 2px; width: 10px; margin: 0 2px 0 11px; font-size: 10px; line-height: 9px; }
.cell + .coord { margin-left: 15px; }
.coord i { width: 6px; height: 6px; background: #fff; border-left: 1px solid #111; }
.status input { flex: none; width: 73px; height: 18px; padding-left: 4px; background: #383838; border: 1px solid #999; }
.status input:disabled { color: #999; background: #4a4a4a; }
.zoom, .time { height: 22px; padding-left: 3px; border-left: 1px solid #ddd; }
.zoom { width: 56px; margin-left: 6px; }
.time { width: 60px; }

/* dialogs */
.dialog { position: absolute; background: #f0f0f0; border: 1px solid #aaa; box-shadow: 0 4px 14px rgba(0, 0, 0, .4); }
.dialog header { display: flex; align-items: center; height: 29px; padding: 0 9px 0 8px; background: #fff; }
.dialog h2 { flex: 1; font-size: 12px; font-weight: 400; }
.dialog header button svg { width: 12px; height: 12px; }
.dialog select { border: 1px solid #7a7a7a; background: #fff url("data:image/svg+xml,%3Csvg xmlns='http://www.w3.org/2000/svg' width='10' height='6'%3E%3Cpath d='M1 .5l4 4 4-4' fill='none' stroke='%23444' stroke-width='1.200'/%3E%3C/svg%3E") right 3px center no-repeat; }
.dialog input[type="checkbox"], .dialog input[type="radio"] { appearance: none; flex: none; width: 13px; height: 13px; border: 1px solid #333; background: #fff center no-repeat; }
.dialog input[type="radio"] { border-radius: 50%; }
.dialog input[type="checkbox"]:checked { background-image: url("data:image/svg+xml,%3Csvg xmlns='http://www.w3.org/2000/svg' width='11' height='11'%3E%3Cpath d='M1.500 5.500l3 3 5-6' fill='none' stroke='%23222' stroke-width='1.300'/%3E%3C/svg%3E"); }
.dialog input[type="radio"]:checked { background-image: radial-gradient(circle, #222 3px, transparent 4px); }
.check { display: flex; align-items: center; gap: 6px; white-space: nowrap; }
fieldset { border: 1px solid #dcdcdc; min-width: 0; }
legend { padding: 0 3px 0 2px; margin-left: 6px; height: 16px; }

.save { left: 371px; top: 78px; width: 818px; height: 534px; }
.save header { padding-left: 8px; }
.save h2 { color: #999; padding-left: 4px; }
.logo { width: 16px; height: 16px; }
.savebody { position: relative; display: flex; height: 503px; padding: 5px 5px 10px; }
.places { display: flex; flex-direction: column; gap: 6px; width: 152px; margin-right: 10px; }
.dialog .grey { height: 23px; padding-left: 3px; background-color: #e1e1e1; border-color: #adadad; }
.history { display: flex; flex: 1; min-height: 0; border: 1px solid #777f88; border-width: 2px 1px; background: #383838; overflow: hidden; }
.thumbs { width: 132px; color: #fff; padding-top: 2px; }
.thumbs figure { width: 116px; height: 135px; }
.thumbs figure div { display: grid; place-items: center; width: 93px; height: 93px; margin-left: 21px; background: #fff; border: 1px solid #666; box-shadow: 3px 3px 0 -1px #c0c0c0; }
.thumbs svg { width: 22px; height: 28px; }
.thumbs figcaption { text-align: center; padding-top: 5px; }
.lightscroll { display: flex; flex-direction: column; width: 16px; background: #f0f0f0; }
.lightscroll svg { width: 16px; height: 16px; }
.lightscroll i { height: 160px; margin-bottom: auto; background: #cdcdcd; }

.files { width: 408px; display: flex; flex-direction: column; }
.savein { display: flex; align-items: center; height: 23px; margin-bottom: 4px; padding-left: 5px; }
.savein label { width: 43px; white-space: nowrap; }
.folder { display: flex; align-items: center; width: 222px; height: 22px; margin-right: 5px; padding-left: 6px; border: 1px solid #7a7a7a; background: #fff; }
.folder svg { width: 14px; height: 16px; }
.dialog .folder select { flex: 1; border: 0; padding-left: 5px; }
.savein button { margin-right: 5px; }
.savein button svg { width: 18px; height: 18px; }
.savein .views svg { width: 26px; }
.list { position: relative; height: 257px; background: #fff; overflow: hidden; }
.list table { width: 100%; border-collapse: collapse; table-layout: fixed; }
.list th { height: 25px; padding: 0 0 0 6px; font-weight: 400; text-align: left; border-right: 1px solid #e5e5e5; overflow: hidden; }
.list th:last-child { border: 0; }
.cname { width: 271px; }
.cdate { width: 120px; }
.sort { position: absolute; left: 132px; top: 0; width: 9px; height: 5px; }
.list p { text-align: center; padding-top: 1px; }
.hlight { display: flex; height: 15px; margin-bottom: 10px; }
.hlight svg { width: 16px; height: 16px; }
.hlight i { width: 200px; background: #cdcdcd; }
.row { display: flex; align-items: center; height: 18px; margin-bottom: 12px; padding-left: 2px; }
.row label { width: 80px; white-space: nowrap; }
.row input { width: 200px; height: 20px; border: 1px solid #7a7a7a; background: #fff; }
.desc { width: 402px; flex: 1; margin-top: 26px; }
.preview { width: 132px; margin: 8px 0 0 74px; }
.preview .check { gap: 3px; }
.box { height: 132px; margin-top: 4px; border: solid 1px; border-color: #a0a0a0 #fff #fff #a0a0a0; }
.resize { position: absolute; right: 2px; bottom: 1px; width: 9px; height: 9px; }

.export { left: 565px; top: 174px; width: 431px; height: 341px; border-color: #1883d7; }
.export form { display: flex; flex-direction: column; padding: 9px 11px 14px 12px; }
.export legend { margin-left: -27px; }
.cols { display: flex; gap: 16px; }
.scene { width: 203px; height: 101px; padding: 7px 0 0 33px; }
.scene .check { height: 17px; margin-bottom: 9px; }
.modes { display: flex; flex-direction: column; width: 186px; padding-top: 5px; }
.modes label { height: 17px; margin-bottom: 2px; }
.modes select { flex: none; height: 23px; padding-left: 5px; }
.modes select + label { margin: 7px 0 4px; }
.hier { height: 112px; margin-top: 6px; padding: 10px 0 0 33px; }
.hier .check { height: 17px; margin-bottom: 9px; }
.prefix { display: flex; padding-left: 62px; gap: 4px; margin-top: -1px; }
.prefix label { white-space: nowrap; }
.prefix input { width: 163px; height: 27px; margin-top: -3px; padding: 0 5px 3px; border: 1px solid #7a7a7a; background: #fff; }
.uv { margin: 11px 0 17px 34px; }
.actions { display: flex; padding-left: 5px; }
.actions button { height: 25px; background: #e1e1e1; border: 1px solid #adadad; }
.actions .defaults { width: 129px; margin-right: auto; }
.actions .ok { width: 86px; border: 2px solid #0078d7; margin-right: 12px; }
.actions .cancel { width: 86px; margin-right: 7px; }
```
